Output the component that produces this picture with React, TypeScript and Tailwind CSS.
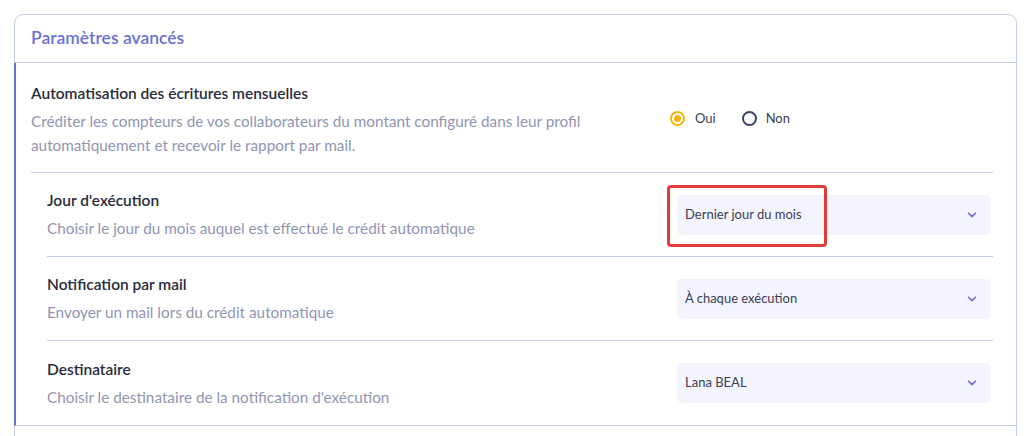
import React from 'react'

const font = { fontFamily: '"Source Sans Pro", Lato, "Noto Sans", sans-serif' }

interface SettingRowProps {
  title: string
  description: string
  value: string
  highlighted?: boolean
  last?: boolean
}

function Chevron() {
  return (
    <svg width="10" height="6" viewBox="0 0 10 6" className="text-[#6b6fd6]">
      <path d="M1.5 1.2 5 4.6 8.5 1.2" fill="none" stroke="currentColor" strokeWidth="1.6" strokeLinecap="round" strokeLinejoin="round" />
    </svg>
  )
}

function SettingRow({ title, description, value, highlighted = false, last = false }: SettingRowProps) {
  return (
    <div className={`flex items-center justify-between h-[84px] ${last ? '' : 'border-b border-[#c3cfe8]'}`}>
      <div className="flex flex-col gap-[9px]">
        <p className="text-[15.5px] leading-[19px] font-semibold text-[#2a2c3a]">{title}</p>
        <p className="text-[15.3px] leading-[19px] text-[#9195b2]">{description}</p>
      </div>
      <div className="relative mr-[2px]">
        <button className="flex items-center justify-between w-[314px] h-[40px] rounded-[5px] bg-[#f4f4fe] pl-[8px] pr-[14px] text-[13px] text-[#3a3d52]">
          <span>{value}</span>
          <Chevron />
        </button>
        {highlighted && (
          <div className="absolute left-[-10px] top-[-10px] w-[160px] h-[62px] rounded-[4px] border-[3px] border-[#e53a3a]" />
        )}
      </div>
    </div>
  )
}

export default function App() {
  return (
    <div className="bg-white w-[1033px] h-[436px] overflow-hidden pt-[14px] pl-[14px] pr-[16px]" style={font}>
      <div className="rounded-t-[9px] border border-[#c3cfe8] bg-white">
        <div className="h-[48px] flex items-center px-[16px] border-b border-[#c3cfe8]">
          <h2 className="text-[17.5px] font-semibold text-[#6b6fd6]">Paramètres avancés</h2>
        </div>
        <div className="border-l-2 border-[#6b6fd6] ml-[-1px] pl-[15px] pr-[23px] border-b border-b-[#c3cfe8]">
          <div className="flex items-start justify-between pt-[21px] h-[110px] border-b border-[#c3cfe8]">
            <div className="flex flex-col">
              <p className="text-[15.5px] leading-[19px] font-semibold text-[#2a2c3a]">Automatisation des écritures mensuelles</p>
              <p className="mt-[6px] text-[15.3px] leading-[24px] text-[#9195b2] w-[570px]">
                Créditer les compteurs de vos collaborateurs du montant configuré dans leur profil automatiquement et recevoir le rapport par mail.
              </p>
            </div>
            <div className="flex items-center gap-[26px] mt-[25px] mr-[203px] text-[13px] text-[#3a3d52]">
              <label className="flex items-center gap-[10px]">
                <span className="w-[15px] h-[15px] rounded-full border-2 border-[#f7b50c] flex items-center justify-center">
                  <span className="w-[7px] h-[7px] rounded-full bg-[#f7b50c]" />
                </span>
                Oui
              </label>
              <label className="flex items-center gap-[9px]">
                <span className="w-[15px] h-[15px] rounded-full border-2 border-[#3a4262]" />
                Non
              </label>
            </div>
          </div>
          <div className="ml-[16px]">
            <SettingRow title="Jour d'exécution" description="Choisir le jour du mois auquel est effectué le crédit automatique" value="Dernier jour du mois" highlighted />
            <SettingRow title="Notification par mail" description="Envoyer un mail lors du crédit automatique" value="À chaque exécution" />
            <SettingRow title="Destinataire" description="Choisir le destinataire de la notification d'exécution" value="Lana BEAL" last />
          </div>
        </div>
        <div className="h-[40px]" />
      </div>
    </div>
  )
}
